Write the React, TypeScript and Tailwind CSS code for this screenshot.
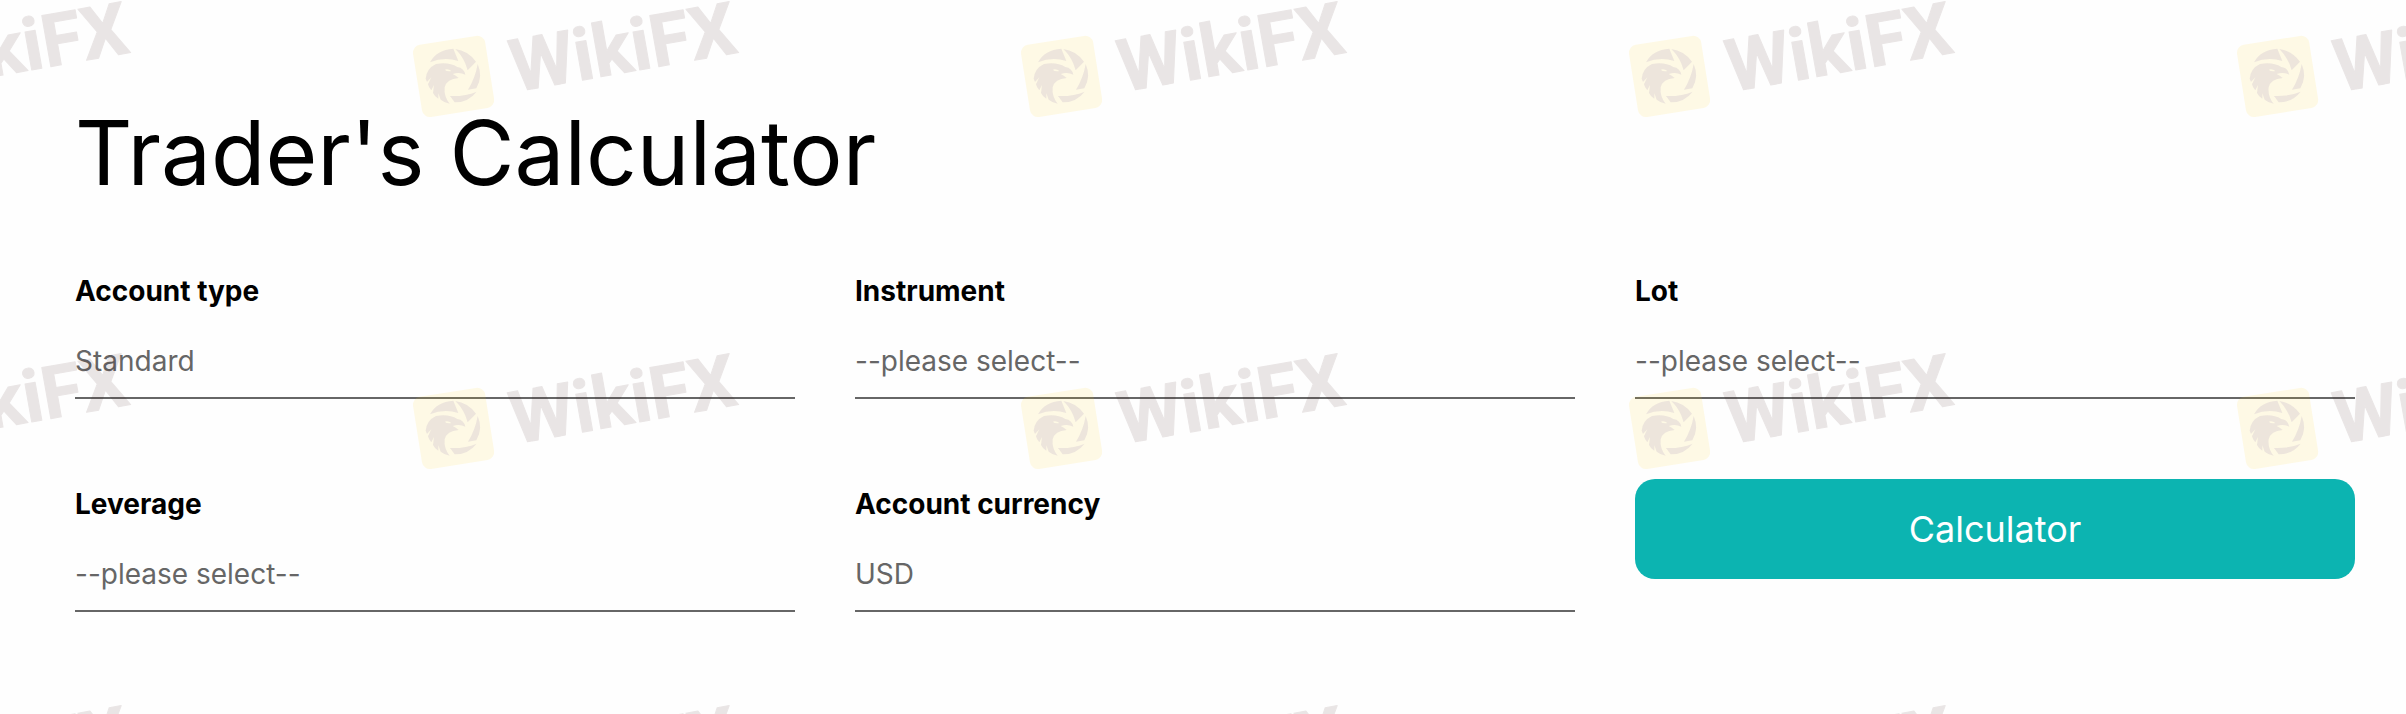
import { useId } from 'react';

const PLACEHOLDER = '--please select--';

const watermarkTiles = Array.from({ length: 15 }, (_, i) => i);

interface SelectFieldProps {
  label: string;
  options: string[];
}

function SelectField({ label, options }: SelectFieldProps) {
  const id = useId();
  return (
    <div className="flex flex-col">
      <label htmlFor={id} className="text-[28px] leading-[50px] font-bold text-black mb-[9px]">
        {label}
      </label>
      <select
        id={id}
        className="w-full h-[74px] appearance-none rounded-none border-b-2 border-[#666666] bg-transparent p-0 text-[28px] text-[#666666] outline-none cursor-pointer"
      >
        {options.map((o) => (
          <option key={o}>{o}</option>
        ))}
      </select>
    </div>
  );
}

function WatermarkTile() {
  return (
    <svg viewBox="0 0 608 352" className="block w-[608px] h-[352px]">
      {/* Badge */}
      <rect x="17" y="40" width="73" height="73" rx="8" transform="rotate(-9 53 76)" fill="#ffcf1c" fillOpacity="0.11" />
      <g transform="scale(0.3333)" fill="#41208a" fillOpacity="0.09">
        {/* shutter blades */}
        <path d="M90 187 Q110 149 160 146 L175 183 Q132 170 90 187 Z" />
        <path d="M166 147 Q204 152 228 185 L203 211 Q193 173 166 147 Z" />
        <path d="M233 192 Q250 229 229 265 L204 269 Q226 234 233 192 Z" />
        <path d="M230 275 Q204 308 164 307 L150 288 Q194 290 230 275 Z" />
        {/* eagle head */}
        <path
          fillRule="evenodd"
          d="M77 236 Q80 205 108 192 Q146 185 172 201 Q192 204 196 224 Q178 215 158 222 Q168 226 176 234 Q140 237 134 262 Q131 290 149 311 Q131 307 122 299 L115 280 L115 296 Q104 290 99 279 L102 255 L94 271 Q86 263 84 253 L94 232 L81 246 Z M134 209 Q142 216 154 213 Q146 206 134 209 Z"
        />
      </g>
      <text
        x="115"
        y="92"
        transform="rotate(-10 115 92)"
        fill="#3c1414"
        stroke="#3c1414"
        strokeWidth="1"
        strokeLinejoin="round"
        opacity="0.1"
        className="font-['Roboto',sans-serif] text-[73px] font-bold"
      >
        WikiFX
      </text>
    </svg>
  );
}

function Watermark() {
  return (
    <div aria-hidden="true" className="pointer-events-none absolute inset-0 overflow-hidden">
      <div className="-ml-[208px] grid w-max grid-cols-5">
        {watermarkTiles.map((i) => (
          <WatermarkTile key={i} />
        ))}
      </div>
    </div>
  );
}

export default function App() {
  return (
    <main className="relative min-h-screen overflow-hidden bg-[#fefefe] pt-[100px] pr-[51px] pb-[102px] pl-[75px] font-['Inter',sans-serif]">
      <h1 className="mb-[61px] text-[89px] leading-[105px] font-normal text-black">Trader's Calculator</h1>

      <form className="grid grid-cols-3 gap-x-[60px] gap-y-20" onSubmit={(e) => e.preventDefault()}>
        <SelectField label="Account type" options={['Standard']} />
        <SelectField label="Instrument" options={[PLACEHOLDER]} />
        <SelectField label="Lot" options={[PLACEHOLDER]} />
        <SelectField label="Leverage" options={[PLACEHOLDER]} />
        <SelectField label="Account currency" options={['USD']} />
        <button
          type="submit"
          className="h-[100px] rounded-[20px] bg-[#0cb4b1] text-[36px] text-white cursor-pointer"
        >
          Calculator
        </button>
      </form>

      <Watermark />
    </main>
  );
}
